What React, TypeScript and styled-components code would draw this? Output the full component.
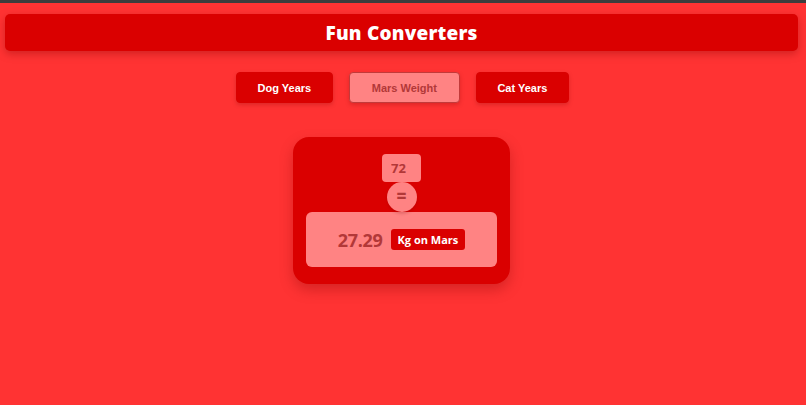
import React, { useState } from "react";
import styled, { createGlobalStyle } from "styled-components";

const GlobalStyle = createGlobalStyle`
  * { margin:0; padding:0; box-sizing:border-box; }
  html, body, #root {
    width:100%;
    height:100%;
    background:#ff3333;
    font-family:"Liberation Sans", Arial, sans-serif;
  }
`;

const TopStrip = styled.div`
  height: 3px;
  background: #3d3d3d;
`;

const Page = styled.div`
  display: flex;
  flex-direction: column;
  align-items: center;
  padding: 11px 8px 0 5px;
`;

const Header = styled.header`
  width: 100%;
  height: 37px;
  background: #da0000;
  border-radius: 5px;
  box-shadow: 0 3px 8px rgba(120, 0, 0, 0.35);
  display: flex;
  align-items: center;
  justify-content: center;

  h1 {
    color: #fff;
    font-family: "Open Sans", "Inter", sans-serif;
    font-weight: 800;
    font-size: 19px;
    letter-spacing: 0.2px;
  }
`;

const Tabs = styled.nav`
  display: flex;
  align-items: center;
  gap: 16px;
  margin-top: 21px;
  margin-left: 2px;
`;

const Tab = styled.button<{ $active?: boolean }>`
  height: 31px;
  padding: 0 ${({ $active }) => ($active ? 22 : 20.5)}px;
  border-radius: 4px;
  border: 1px solid ${({ $active }) => ($active ? "#c23a3a" : "#da0000")};
  background: ${({ $active }) => ($active ? "#ff8383" : "#da0000")};
  color: ${({ $active }) => ($active ? "#b23838" : "#fff")};
  font-family: "Liberation Sans", Arial, sans-serif;
  font-weight: 700;
  font-size: 11px;
  box-shadow: 0 2px 4px rgba(120, 0, 0, 0.25);
  cursor: pointer;
`;

const Card = styled.section`
  margin-top: 34px;
  width: 217px;
  height: 147px;
  background: #da0000;
  border-radius: 16px;
  box-shadow: 0 6px 14px rgba(120, 0, 0, 0.3);
  display: flex;
  flex-direction: column;
  align-items: center;
  padding-top: 17px;
`;

const Input = styled.input`
  width: 39px;
  height: 28px;
  border: none;
  outline: none;
  border-radius: 4px;
  background: #ff8383;
  color: #b23838;
  font-family: "Open Sans", sans-serif;
  font-weight: 700;
  font-size: 13px;
  padding-left: 9px;
`;

const Equals = styled.div`
  width: 30px;
  height: 30px;
  border-radius: 50%;
  background: #ff8383;
  color: #b23838;
  font-family: "Open Sans", sans-serif;
  font-weight: 800;
  font-size: 17px;
  line-height: 28px;
  text-align: center;
  position: relative;
  z-index: 1;
  box-shadow: 0 2px 3px rgba(120, 0, 0, 0.2);
`;

const Result = styled.div`
  width: 191px;
  height: 55px;
  border-radius: 6px;
  background: #ff8383;
  display: flex;
  align-items: center;
  justify-content: center;
  gap: 8px;
`;

const Value = styled.span`
  color: #b23838;
  font-family: "Open Sans", sans-serif;
  font-weight: 700;
  font-size: 18px;
  letter-spacing: -0.3px;
`;

const Unit = styled.span`
  background: #da0000;
  color: #fff;
  font-family: "Open Sans", sans-serif;
  font-weight: 700;
  font-size: 11px;
  padding: 3px 7px;
  border-radius: 3px;
`;

const tabs = ["Dog Years", "Mars Weight", "Cat Years"];

const App = () => {
  const [active, setActive] = useState(1);
  const [kg, setKg] = useState("72");
  const mars = ((parseFloat(kg) || 0) * 0.379).toFixed(2);

  return (
    <>
      <GlobalStyle />
      <TopStrip />
      <Page>
        <Header>
          <h1>Fun Converters</h1>
        </Header>
        <Tabs>
          {tabs.map((t, i) => (
            <Tab key={t} $active={i === active} onClick={() => setActive(i)}>
              {t}
            </Tab>
          ))}
        </Tabs>
        <Card>
          <Input value={kg} onChange={(e) => setKg(e.target.value)} />
          <Equals>=</Equals>
          <Result>
            <Value>{mars}</Value>
            <Unit>Kg on Mars</Unit>
          </Result>
        </Card>
      </Page>
    </>
  );
};

export default App;
